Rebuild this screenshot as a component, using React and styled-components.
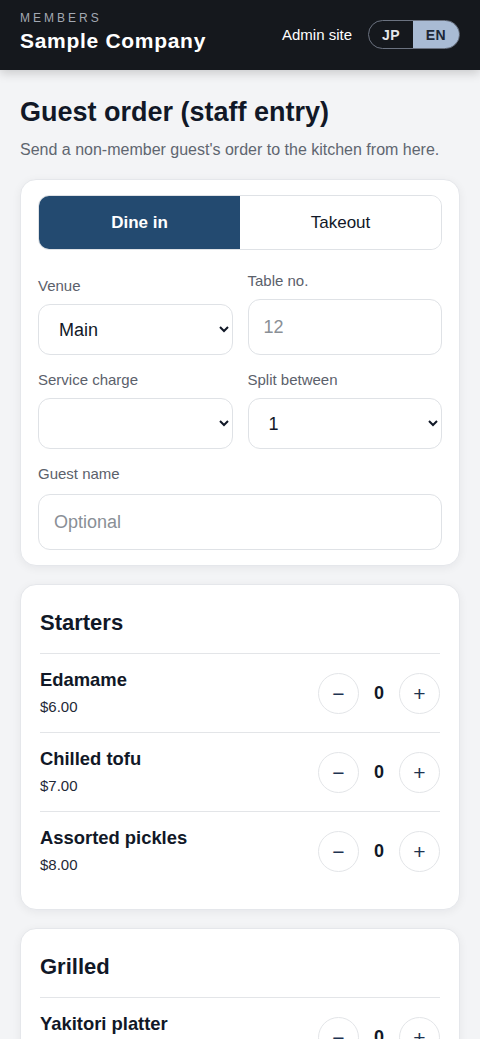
import React, { useState } from "react";
import styled, { createGlobalStyle } from "styled-components";

const GlobalStyle = createGlobalStyle`
  * { box-sizing: border-box; }
  body {
    margin: 0;
    background: #f3f4f6;
    font-family: "Liberation Sans", Arial, sans-serif;
    color: #111827;
  }
`;

const Header = styled.header`
  height: 70px;
  background: #15181d;
  display: flex;
  align-items: center;
  justify-content: space-between;
  padding: 0 20px;
  box-shadow: 0 3px 10px rgba(0, 0, 0, 0.18);
`;

const Brand = styled.div`
  display: flex;
  flex-direction: column;
  gap: 3px;
  margin-top: -6px;
`;

const Eyebrow = styled.div`
  font-size: 12px;
  letter-spacing: 3px;
  color: #a3a9b3;
  line-height: 14px;
`;

const CompanyName = styled.div`
  font-size: 21px;
  font-weight: 700;
  letter-spacing: 0.7px;
  color: #ffffff;
  line-height: 26px;
`;

const HeaderRight = styled.div`
  display: flex;
  align-items: center;
  gap: 16px;
  margin-top: -1px;
`;

const AdminLink = styled.a`
  color: #ffffff;
  font-size: 15px;
  text-decoration: none;
`;

const LangToggle = styled.div`
  display: flex;
  height: 29px;
  border: 1px solid #6b7280;
  border-radius: 15px;
  overflow: hidden;
`;

const LangButton = styled.button`
  border: 0;
  width: ${(p) => (p.active ? "46px" : "44px")};
  background: ${(p) => (p.active ? "#a9bbd4" : "transparent")};
  color: ${(p) => (p.active ? "#1c2736" : "#e5e7eb")};
  font-family: inherit;
  font-size: 14px;
  font-weight: 700;
  letter-spacing: 0.5px;
  padding: 0;
  cursor: pointer;
`;

const Main = styled.main`
  padding: 25px 20px 20px;
  display: flex;
  flex-direction: column;
`;

const Title = styled.h1`
  margin: 0;
  font-size: 27px;
  line-height: 34px;
  font-weight: 700;
  color: #111827;
`;

const Subtitle = styled.p`
  margin: 10px 0 18px;
  font-size: 16px;
  line-height: 22px;
  color: #5f6670;
`;

const Card = styled.section`
  background: #ffffff;
  border: 1px solid #e5e7eb;
  border-radius: 16px;
  box-shadow: 0 2px 10px rgba(17, 24, 39, 0.06);
  padding: ${(p) => p.pad || "20px"};
  margin-bottom: 18px;
`;

const Segment = styled.div`
  display: grid;
  grid-template-columns: 1fr 1fr;
  height: 55px;
  border: 1px solid #dfe2e6;
  border-radius: 11px;
  overflow: hidden;
  margin-bottom: 20px;
`;

const SegmentButton = styled.button`
  border: 0;
  background: ${(p) => (p.active ? "#234a70" : "#ffffff")};
  color: ${(p) => (p.active ? "#ffffff" : "#111827")};
  font-family: inherit;
  font-size: 17px;
  font-weight: ${(p) => (p.active ? 700 : 400)};
  cursor: pointer;
`;

const FieldGrid = styled.div`
  display: grid;
  grid-template-columns: 1fr 1fr;
  column-gap: 15px;
  row-gap: 14px;
  align-items: end;
`;

const Field = styled.label`
  display: flex;
  flex-direction: column;
  gap: ${(p) => (p.wide ? "10px" : "8px")};
  grid-column: ${(p) => (p.wide ? "1 / -1" : "auto")};
`;

const Label = styled.span`
  font-size: 15px;
  line-height: 21px;
  color: #5b616b;
`;

const Select = styled.select`
  height: 51px;
  width: 100%;
  border: 1px solid #dfe2e6;
  border-radius: 12px;
  background: #ffffff;
  padding: 0 8px 0 16px;
  font-family: inherit;
  font-size: 18px;
  color: #111827;
`;

const Input = styled.input`
  height: 56px;
  width: 100%;
  border: 1px solid #dfe2e6;
  border-radius: 12px;
  background: #ffffff;
  padding: 0 15px;
  font-family: inherit;
  font-size: 18px;
  color: #111827;
  &::placeholder {
    color: #8a8f96;
  }
`;

const CategoryTitle = styled.h2`
  margin: 0;
  font-size: 22px;
  line-height: 28px;
  font-weight: 700;
  padding: 4px 0 16px;
  border-bottom: 1px solid #e3e5e8;
`;

const ItemRow = styled.div`
  display: flex;
  align-items: center;
  justify-content: space-between;
  padding: 15px 0;
  border-bottom: ${(p) => (p.last ? "none" : "1px solid #e3e5e8")};
`;

const ItemInfo = styled.div`
  display: flex;
  flex-direction: column;
  gap: 6px;
`;

const ItemName = styled.div`
  font-size: 18.4px;
  line-height: 22px;
  font-weight: 700;
  color: #111827;
`;

const ItemPrice = styled.div`
  font-size: 15px;
  line-height: 20px;
  color: #1f2937;
`;

const Stepper = styled.div`
  display: flex;
  align-items: center;
`;

const StepButton = styled.button`
  width: 41px;
  height: 41px;
  border-radius: 50%;
  border: 1px solid #e3e5e8;
  background: #ffffff;
  color: #1e3350;
  font-family: inherit;
  font-size: 21px;
  line-height: 1;
  padding: 0;
  display: flex;
  align-items: center;
  justify-content: center;
  cursor: pointer;
`;

const Count = styled.span`
  width: 40px;
  text-align: center;
  font-size: 18px;
  font-weight: 700;
  color: #111827;
`;

const menu = [
  {
    name: "Starters",
    items: [
      { name: "Edamame", price: 6 },
      { name: "Chilled tofu", price: 7 },
      { name: "Assorted pickles", price: 8 },
    ],
  },
  {
    name: "Grilled",
    items: [
      { name: "Yakitori platter", price: 14 },
      { name: "Grilled salmon", price: 16 },
    ],
  },
];

const App = () => {
  const [lang, setLang] = useState("EN");
  const [mode, setMode] = useState("dine");
  const [qty, setQty] = useState({});

  const change = (key, d) =>
    setQty((q) => ({ ...q, [key]: Math.max(0, (q[key] || 0) + d) }));

  return (
    <>
      <GlobalStyle />
      <Header>
        <Brand>
          <Eyebrow>MEMBERS</Eyebrow>
          <CompanyName>Sample Company</CompanyName>
        </Brand>
        <HeaderRight>
          <AdminLink href="#">Admin site</AdminLink>
          <LangToggle>
            <LangButton active={lang === "JP"} onClick={() => setLang("JP")}>
              JP
            </LangButton>
            <LangButton active={lang === "EN"} onClick={() => setLang("EN")}>
              EN
            </LangButton>
          </LangToggle>
        </HeaderRight>
      </Header>

      <Main>
        <Title>Guest order (staff entry)</Title>
        <Subtitle>Send a non-member guest's order to the kitchen from here.</Subtitle>

        <Card pad="15px 17px 15px">
          <Segment>
            <SegmentButton active={mode === "dine"} onClick={() => setMode("dine")}>
              Dine in
            </SegmentButton>
            <SegmentButton active={mode === "take"} onClick={() => setMode("take")}>
              Takeout
            </SegmentButton>
          </Segment>

          <FieldGrid>
            <Field>
              <Label>Venue</Label>
              <Select defaultValue="main">
                <option value="main">Main</option>
                <option value="annex">Annex</option>
              </Select>
            </Field>
            <Field>
              <Label>Table no.</Label>
              <Input placeholder="12" />
            </Field>
            <Field>
              <Label>Service charge</Label>
              <Select defaultValue="">
                <option value=""></option>
                <option value="10">10%</option>
              </Select>
            </Field>
            <Field>
              <Label>Split between</Label>
              <Select defaultValue="1">
                <option value="1">1</option>
                <option value="2">2</option>
                <option value="3">3</option>
              </Select>
            </Field>
            <Field wide>
              <Label>Guest name</Label>
              <Input placeholder="Optional" />
            </Field>
          </FieldGrid>
        </Card>

        {menu.map((cat) => (
          <Card key={cat.name} pad="20px 19px 19px">
            <CategoryTitle>{cat.name}</CategoryTitle>
            {cat.items.map((item, i) => {
              const key = cat.name + item.name;
              return (
                <ItemRow key={key} last={i === cat.items.length - 1}>
                  <ItemInfo>
                    <ItemName>{item.name}</ItemName>
                    <ItemPrice>${item.price.toFixed(2)}</ItemPrice>
                  </ItemInfo>
                  <Stepper>
                    <StepButton onClick={() => change(key, -1)}>−</StepButton>
                    <Count>{qty[key] || 0}</Count>
                    <StepButton onClick={() => change(key, 1)}>+</StepButton>
                  </Stepper>
                </ItemRow>
              );
            })}
          </Card>
        ))}
      </Main>
    </>
  );
};

export default App;
